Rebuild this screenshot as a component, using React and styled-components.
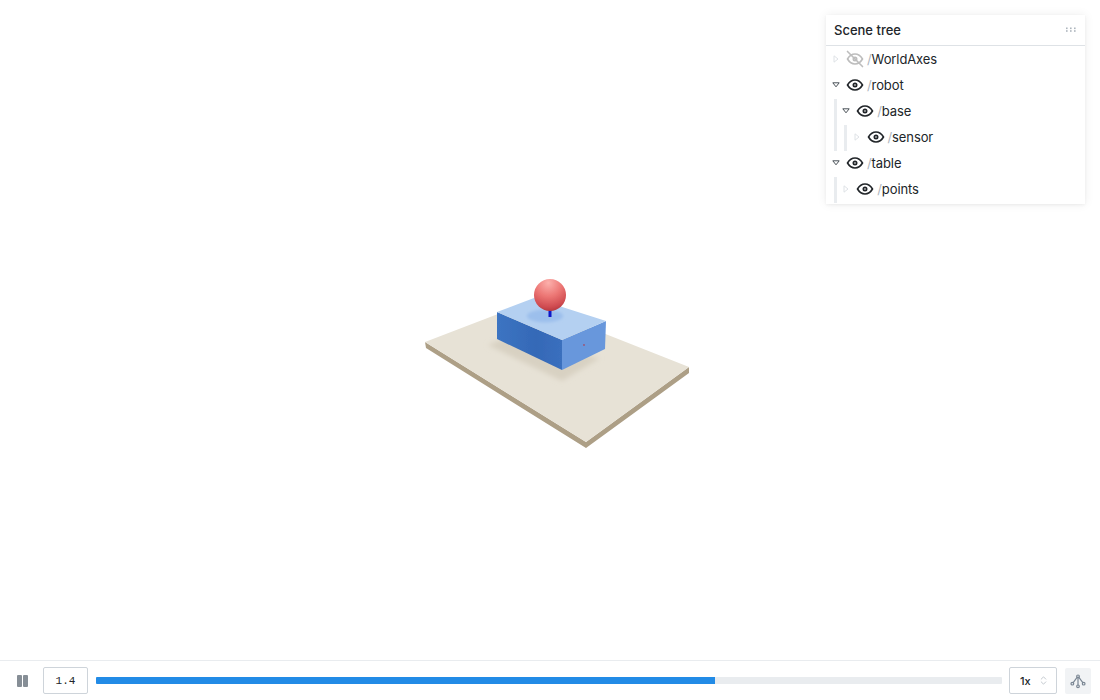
import styled, { createGlobalStyle } from "styled-components";
import { ChevronsUpDown } from "lucide-react";

const tree = [
  { name: "WorldAxes", hidden: true },
  {
    name: "robot",
    open: true,
    children: [
      { name: "base", open: true, children: [{ name: "sensor" }] },
    ],
  },
  { name: "table", open: true, children: [{ name: "points" }] },
];

function Caret({ open, dim }) {
  return (
    <CaretBox>
      <svg width="8" height="8" viewBox="0 0 8 8">
        {open ? (
          <path d="M0.8 1.8H7.2L4 5.8Z" fill="none" stroke="#495057" strokeWidth="1" strokeLinejoin="round" />
        ) : (
          <path d="M2 0.8V7.2L6 4Z" fill="none" stroke={dim ? "#dee2e6" : "#ced4da"} strokeWidth="1" strokeLinejoin="round" />
        )}
      </svg>
    </CaretBox>
  );
}

function Eye({ hidden }) {
  const colour = hidden ? "#bdbdbd" : "#212529";
  return (
    <svg width="20" height="20" viewBox="0 0 24 24" fill="none" stroke={colour} strokeWidth="2" strokeLinecap="round" strokeLinejoin="round">
      <path d="M10 12a2 2 0 1 0 4 0a2 2 0 0 0 -4 0" />
      <path d="M21 12c-2.4 4 -5.4 6 -9 6c-3.6 0 -6.6 -2 -9 -6c2.4 -4 5.4 -6 9 -6c3.6 0 6.6 2 9 6" />
      {hidden && <path d="M3 3l18 18" />}
    </svg>
  );
}

function TreeNode({ node }) {
  return (
    <div>
      <Row>
        <Caret open={node.open} dim={!node.children} />
        <Eye hidden={node.hidden} />
        <Label>
          <Slash>/</Slash>
          {node.name}
        </Label>
      </Row>
      {node.children && (
        <Children>
          {node.children.map((c) => (
            <TreeNode key={c.name} node={c} />
          ))}
        </Children>
      )}
    </div>
  );
}

function Scene() {
  return (
    <SceneSvg viewBox="0 0 1100 660">
      <defs>
        <radialGradient id="ball" cx="0.45" cy="0.12" r="0.95">
          <stop offset="0" stopColor="#fcb0ac" />
          <stop offset="0.45" stopColor="#ec7674" />
          <stop offset="0.8" stopColor="#cf4b50" />
          <stop offset="1" stopColor="#a93038" />
        </radialGradient>
        <linearGradient id="front" x1="0" y1="0" x2="1" y2="0">
          <stop offset="0" stopColor="#3c74c2" />
          <stop offset="0.6" stopColor="#3569b7" />
          <stop offset="1" stopColor="#3a6fbe" />
        </linearGradient>
        <filter id="soft" x="-30%" y="-30%" width="160%" height="160%">
          <feGaussianBlur stdDeviation="2.5" />
        </filter>
        <filter id="softer" x="-30%" y="-30%" width="160%" height="160%">
          <feGaussianBlur stdDeviation="1.5" />
        </filter>
        <filter id="pixel" x="-5%" y="-5%" width="110%" height="110%">
          <feGaussianBlur stdDeviation="0.7" />
        </filter>
      </defs>
      <g filter="url(#pixel)">
        <polygon points="425,342 426,348 586,448 689,373 689,367 586,442" fill="#ad9f86" />
        <polygon points="425,342 527,303 689,367 586,442" fill="#e7e2d6" />
        <polygon points="488,345 505,338 600,358 562,381" fill="#d8d1c2" filter="url(#soft)" />
        <polygon points="497,312 562,340 562,370 497,339" fill="url(#front)" />
        <polygon points="562,340 606,321 605,349 562,370" fill="#6797dc" />
        <polygon points="497,312 534,298 606,321 562,340" fill="#b4d0f1" />
        <ellipse cx="545" cy="316" rx="18" ry="6.5" fill="#9cbfec" filter="url(#softer)" />
        <rect x="548.5" y="310" width="3" height="7" fill="#0b18c8" />
        <circle cx="550" cy="295" r="16" fill="url(#ball)" />
        <circle cx="584" cy="345" r="0.9" fill="#a0506f" />
      </g>
    </SceneSvg>
  );
}

export default function App() {
  return (
    <Page>
      <GlobalStyle />
      <Viewport>
        <Scene />
        <Panel>
          <PanelHeader>
            <PanelTitle>Scene tree</PanelTitle>
            <svg width="12" height="8" viewBox="0 0 12 8" fill="#adb5bd">
              {[1, 5, 9].map((x) =>
                [1.5, 4.2].map((y) => <rect key={`${x}-${y}`} x={x} y={y} width="1.6" height="1.6" />)
              )}
            </svg>
          </PanelHeader>
          <TreeBody>
            {tree.map((n) => (
              <TreeNode key={n.name} node={n} />
            ))}
          </TreeBody>
        </Panel>
      </Viewport>
      <Controls>
        <PauseIcon>
          <span />
          <span />
        </PauseIcon>
        <TimeBox>1.4</TimeBox>
        <Track>
          <Fill style={{ width: `${(619 / 906) * 100}%` }} />
        </Track>
        <SpeedBox>
          <span>1x</span>
          <ChevronsUpDown size={11} color="#adb5bd" strokeWidth={1.6} />
        </SpeedBox>
        <TreeButton>
          <svg width="16" height="16" viewBox="0 0 24 24" fill="none" stroke="#7b8794" strokeWidth="1.8" strokeLinecap="round" strokeLinejoin="round">
            <circle cx="12" cy="5" r="2" />
            <circle cx="3.5" cy="16" r="2" />
            <circle cx="12" cy="20" r="2" />
            <circle cx="20.5" cy="16" r="2" />
            <path d="M12 7V18M10.6 6.5L4.8 14.4M13.4 6.5L19.2 14.4" />
          </svg>
        </TreeButton>
      </Controls>
    </Page>
  );
}

const GlobalStyle = createGlobalStyle`
  html, body {
    margin: 0;
    padding: 0;
    background: #fff;
    font-family: Inter, "Noto Sans", sans-serif;
  }
`;

const Page = styled.div`
  width: 1100px;
  height: 700px;
  display: flex;
  flex-direction: column;
  overflow: hidden;
`;

const Viewport = styled.div`
  position: relative;
  height: 660px;
`;

const SceneSvg = styled.svg`
  display: block;
  width: 1100px;
  height: 660px;
`;

const Panel = styled.div`
  position: absolute;
  top: 15px;
  left: 826px;
  width: 259px;
  height: 189px;
  background: #fff;
  box-shadow: 0 1px 3px rgba(0, 0, 0, 0.05), 0 0 10px rgba(0, 0, 0, 0.07);
`;

const PanelHeader = styled.div`
  height: 30px;
  border-bottom: 1px solid #dee2e6;
  display: flex;
  align-items: center;
  justify-content: space-between;
  padding: 0 8px;
`;

const PanelTitle = styled.div`
  font-size: 13px;
  font-weight: 500;
  color: #212529;
`;

const TreeBody = styled.div`
  padding-left: 5px;
`;

const Row = styled.div`
  height: 26px;
  display: flex;
  align-items: center;
`;

const CaretBox = styled.div`
  width: 10px;
  display: flex;
  justify-content: center;
  margin-right: 4px;
`;

const Label = styled.span`
  font-size: 13px;
  color: #212529;
  margin-left: 2px;
  letter-spacing: -0.1px;
`;

const Slash = styled.span`
  color: #adb5bd;
`;

const Children = styled.div`
  position: relative;
  padding-left: 10.25px;

  &::before {
    content: "";
    position: absolute;
    left: 3px;
    top: 1px;
    bottom: -1px;
    width: 3px;
    background: #e9ecef;
  }
`;

const Controls = styled.div`
  height: 40px;
  box-sizing: border-box;
  border-top: 1px solid #e9ecef;
  display: flex;
  align-items: center;
  padding: 0 9px 0 17px;
`;

const PauseIcon = styled.div`
  width: 11px;
  height: 12px;
  display: flex;
  justify-content: space-between;
  margin-right: 15px;

  span {
    width: 5px;
    border-radius: 1px;
    background: #868e96;
  }
`;

const TimeBox = styled.div`
  width: 45px;
  height: 27px;
  box-sizing: border-box;
  border: 1px solid #ced4da;
  border-radius: 2px;
  display: flex;
  align-items: center;
  justify-content: center;
  font-family: "Liberation Mono", monospace;
  font-size: 11px;
  color: #212529;
`;

const Track = styled.div`
  flex: 1;
  height: 7px;
  margin: 0 7px 0 8px;
  background: #e9ecef;
  border-radius: 1px;
  overflow: hidden;
`;

const Fill = styled.div`
  height: 100%;
  background: #228be6;
`;

const SpeedBox = styled.div`
  width: 48px;
  height: 27px;
  box-sizing: border-box;
  border: 1px solid #ced4da;
  border-radius: 2px;
  display: flex;
  align-items: center;
  justify-content: space-between;
  padding: 0 7px 0 10px;
  font-size: 11px;
  font-weight: 500;
  color: #212529;
`;

const TreeButton = styled.div`
  width: 26px;
  height: 26px;
  margin-left: 8px;
  background: #f1f3f5;
  border-radius: 2px;
  display: flex;
  align-items: center;
  justify-content: center;
`;
